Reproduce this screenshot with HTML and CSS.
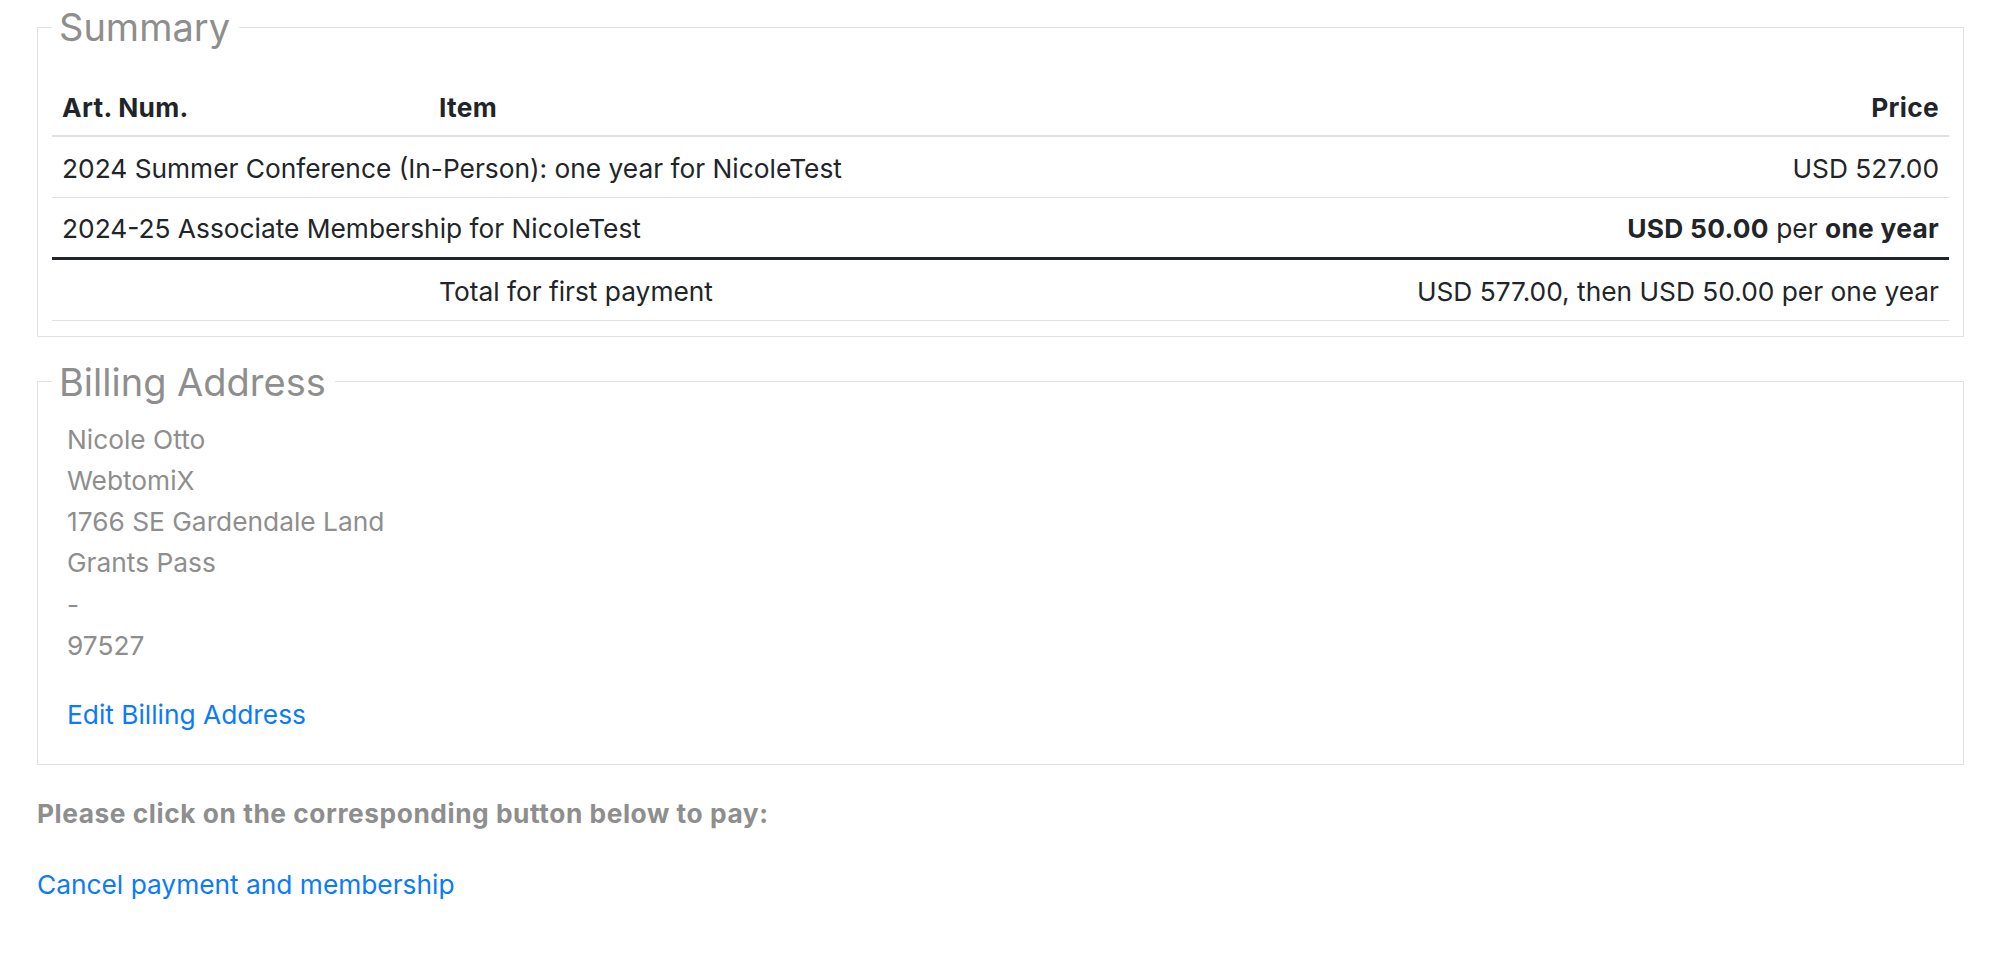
FILE: index.html
```html
<!DOCTYPE html>
<html>
<head>
    <title>Payment Summary</title>
    <link rel="stylesheet" href="styles.css">
</head>
<body>
    <div class="page">
        <fieldset class="box summary">
            <legend>Summary</legend>
            <table class="cart">
                <thead>
                    <tr>
                        <th class="col-art">Art. Num.</th>
                        <th class="col-item">Item</th>
                        <th class="col-price">Price</th>
                    </tr>
                </thead>
                <tbody>
                    <tr>
                        <td colspan="2">2024 Summer Conference (In-Person): one year for NicoleTest</td>
                        <td class="price">USD 527.00</td>
                    </tr>
                    <tr class="last-item">
                        <td colspan="2">2024-25 Associate Membership for NicoleTest</td>
                        <td class="price"><b>USD 50.00</b> per <b>one year</b></td>
                    </tr>
                    <tr>
                        <td></td>
                        <td>Total for first payment</td>
                        <td class="price">USD 577.00, then USD 50.00 per one year</td>
                    </tr>
                </tbody>
            </table>
        </fieldset>

        <fieldset class="box billing">
            <legend>Billing Address</legend>
            <div class="address">
                <div>Nicole Otto</div>
                <div>WebtomiX</div>
                <div>1766 SE Gardendale Land</div>
                <div>Grants Pass</div>
                <div>-</div>
                <div>97527</div>
            </div>
            <a href="#" class="link">Edit Billing Address</a>
        </fieldset>

        <p class="pay-note">Please click on the corresponding button below to pay:</p>
        <a href="#" class="link">Cancel payment and membership</a>
    </div>
</body>
</html>
```

FILE: styles.css
```css
body {
    margin: 0;
    font-family: Inter, "Liberation Sans", sans-serif;
    font-size: 26.3px;
    line-height: 41.3px;
    color: #212529;
    background-color: #fff;
}
.page {
    padding: 5px 36px 40px 37px;
}
.box {
    margin: 0 0 23px 0;
    padding: 0 14px 15px 14px;
    border: 1px solid #dee2e6;
    min-width: 0;
}
.box legend {
    margin-left: 0;
    padding: 0 9px 0 7px;
    font-size: 38px;
    line-height: 44px;
    font-weight: 400;
    color: #8e8e8e;
}
.cart {
    width: 100%;
    margin-top: 29px;
    border-collapse: collapse;
    table-layout: fixed;
}
.cart th,
.cart td {
    padding: 11.5px 10px 8px 10px;
    line-height: 40px;
    text-align: left;
    border-bottom: 1px solid #dee2e6;
    white-space: nowrap;
}
.cart th {
    padding-top: 10px;
    padding-bottom: 7px;
    font-weight: 700;
    letter-spacing: 0.3px;
    border-bottom: 2px solid #dee2e6;
}
.col-art {
    width: 357px;
}
.col-item {
    width: 680px;
}
.cart .col-price,
.cart .price {
    text-align: right;
}
.cart .last-item td {
    border-bottom: 3px solid #212529;
}
.price b {
    font-weight: 700;
    letter-spacing: 0.3px;
}
.billing {
    padding-bottom: 28px;
}
.address {
    margin: 15px 0 28px 15px;
    color: #8e8e8e;
}
.billing .link {
    margin-left: 15px;
}
.link {
    color: #0a7aff;
    text-decoration: none;
}
.pay-note {
    margin: 28px 0 30px 0;
    font-weight: 700;
    letter-spacing: 0.55px;
    color: #8e8e8e;
}
```
